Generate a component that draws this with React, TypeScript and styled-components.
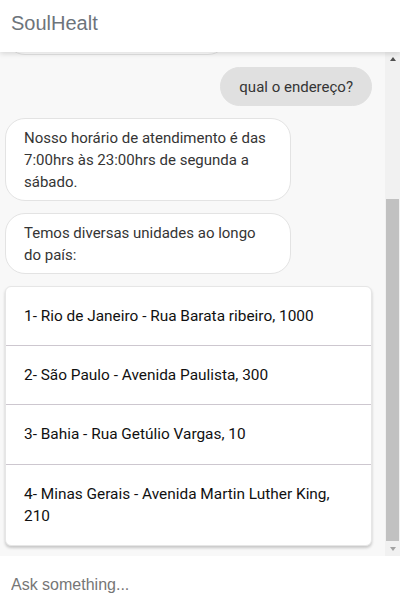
import React, { useLayoutEffect, useRef, useState } from "react";
import styled, { createGlobalStyle } from "styled-components";

const Global = createGlobalStyle`
  html, body { margin: 0; padding: 0; height: 100%; }
  body { font-family: Roboto, "Liberation Sans", Arial, sans-serif; }
  #root { height: 100%; }
  * { box-sizing: border-box; }
`;

const Page = styled.div`
  height: 100vh;
  display: flex;
  flex-direction: column;
  background: #ffffff;
`;

const Header = styled.header`
  height: 52px;
  flex: 0 0 52px;
  display: flex;
  align-items: center;
  padding: 0 11px 5px;
  background: #ffffff;
  box-shadow: 0 2px 5px rgba(0, 0, 0, 0.13);
  position: relative;
  z-index: 2;
`;

const Title = styled.h1`
  margin: 0;
  font-family: "Liberation Sans", Arial, sans-serif;
  font-size: 20px;
  font-weight: 400;
  color: #6d747b;
`;

const ChatRow = styled.div`
  flex: 1;
  min-height: 0;
  display: flex;
  background: #f8f8f8;
`;

const ChatArea = styled.main`
  flex: 1;
  min-width: 0;
  overflow: hidden;
  display: flex;
  flex-direction: column;
  gap: 12px;
  padding: 12px 13px 10px 5px;
`;

const Rail = styled.div`
  flex: 0 0 15px;
  display: flex;
  flex-direction: column;
  background: #f1f1f1;
`;

const RailButton = styled.div`
  flex: 0 0 15px;
  display: flex;
  align-items: center;
  justify-content: center;
`;

const Arrow = styled.span<{ $down?: boolean; $color: string }>`
  width: 0;
  height: 0;
  border-left: 3.5px solid transparent;
  border-right: 3.5px solid transparent;
  ${(p) =>
    p.$down
      ? `border-top: 4px solid ${p.$color}; margin-top: 1px;`
      : `border-bottom: 4px solid ${p.$color}; margin-bottom: 1px;`}
`;

const Track = styled.div`
  flex: 1;
  display: flex;
  flex-direction: column;
  padding: 0 1px;
`;

const Thumb = styled.div`
  background: #c1c1c1;
  flex: 0 0 auto;
`;

const Bubble = styled.div<{ $user?: boolean }>`
  flex: 0 0 auto;
  align-self: ${(p) => (p.$user ? "flex-end" : "flex-start")};
  max-width: 286px;
  padding: 7.5px 18px;
  border-radius: 20px;
  font-size: 15px;
  line-height: 22px;
  color: #353535;
  background: ${(p) => (p.$user ? "#e0e0e0" : "#ffffff")};
  border: 1px solid ${(p) => (p.$user ? "#e0e0e0" : "#e3e3e3")};
`;

const ListCard = styled.ul`
  flex: 0 0 auto;
  margin: 0;
  padding: 0;
  list-style: none;
  background: #ffffff;
  border-radius: 6px;
  border: 1px solid #e6e6e6;
  box-shadow: 0 2px 3px rgba(0, 0, 0, 0.2);
  overflow: hidden;
`;

const ListItem = styled.li`
  padding: 18px 18px;
  font-size: 15.4px;
  line-height: 22.2px;
  color: #111111;
  & + & {
    border-top: 1px solid #cdc7cf;
  }
`;

const InputBar = styled.div`
  flex: 0 0 55px;
  display: flex;
  align-items: center;
  padding-top: 3px;
  background: #ffffff;
`;

const Input = styled.input`
  width: 100%;
  border: none;
  outline: none;
  padding: 0 11px;
  font-family: "Liberation Sans", Arial, sans-serif;
  font-size: 16px;
  color: #333;
  background: transparent;
  &::placeholder {
    color: #767676;
  }
`;

const units = [
  "1- Rio de Janeiro - Rua Barata ribeiro, 1000",
  "2- São Paulo - Avenida Paulista, 300",
  "3- Bahia - Rua Getúlio Vargas, 10",
  "4- Minas Gerais - Avenida Martin Luther King, 210",
];

export default function App() {
  const ref = useRef<HTMLElement>(null);
  const [thumb, setThumb] = useState({ top: 130, height: 344 });
  useLayoutEffect(() => {
    const el = ref.current;
    if (!el) return;
    el.scrollTop = el.scrollHeight;
    const track = el.clientHeight - 30;
    const height = Math.round((track * el.clientHeight) / el.scrollHeight);
    const max = el.scrollHeight - el.clientHeight;
    const top = max > 0 ? Math.round(((track - height) * el.scrollTop) / max) : 0;
    setThumb({ top, height });
  }, []);
  return (
    <>
      <Global />
      <Page>
        <Header>
          <Title>SoulHealt</Title>
        </Header>
        <ChatRow>
          <ChatArea ref={ref}>
            <Bubble>Olá! Sou a assistente virtual da SoulHealt.</Bubble>
            <Bubble $user>qual o horário?</Bubble>
            <Bubble>
              Olá! Sou a assistente virtual
              <br />
              da SoulHealt.
            </Bubble>
            <Bubble $user>qual o endereço?</Bubble>
            <Bubble>Nosso horário de atendimento é das 7:00hrs às 23:00hrs de segunda a sábado.</Bubble>
            <Bubble>Temos diversas unidades ao longo do país:</Bubble>
            <ListCard>
              {units.map((u) => (
                <ListItem key={u}>{u}</ListItem>
              ))}
            </ListCard>
          </ChatArea>
          <Rail>
            <RailButton>
              <Arrow $color="#505050" />
            </RailButton>
            <Track>
              <Thumb style={{ marginTop: thumb.top, height: thumb.height }} />
            </Track>
            <RailButton>
              <Arrow $down $color="#a3a3a3" />
            </RailButton>
          </Rail>
        </ChatRow>
        <InputBar>
          <Input placeholder="Ask something..." />
        </InputBar>
      </Page>
    </>
  );
}
